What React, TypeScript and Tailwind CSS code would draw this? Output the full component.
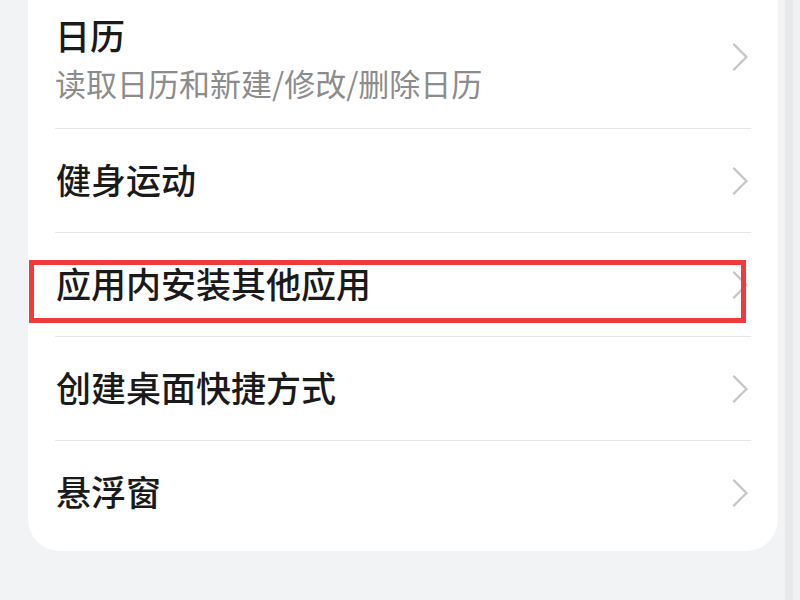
import React from "react";

const rows = [
  { title: "日历", sub: "读取日历和新建/修改/删除日历" },
  { title: "健身运动" },
  { title: "应用内安装其他应用" },
  { title: "创建桌面快捷方式" },
  { title: "悬浮窗" },
];

const Chevron = () => (
  <svg width="18" height="30" viewBox="0 0 18 30" className="shrink-0">
    <path d="M3 2.5 L15.5 15 L3 27.5" fill="none" stroke="#c6c6c8" strokeWidth="2.4" strokeLinecap="round" strokeLinejoin="round" />
  </svg>
);

const App = () => {
  return (
    <main
      className="relative w-[800px] h-[600px] overflow-hidden bg-[#f2f3f5] flex"
      style={{ fontFamily: '"Noto Sans CJK SC", "Noto Sans", sans-serif' }}
    >
      <div className="w-[28px] shrink-0" />
      {/* card */}
      <div className="w-[750px] h-[551px] shrink-0 bg-white rounded-b-[32px] px-[27px] flex flex-col">
        {rows.map((r, i) =>
          r.sub ? (
            <div key={i} className="h-[128px] flex items-center justify-between pt-[12px] pb-[24px]">
              <div className="flex flex-col">
                <span className="text-[35px] leading-[46px] font-medium text-[#1a1a1a]">{r.title}</span>
                <span className="mt-[4px] text-[31px] leading-[42px] text-[#8c8c8c]">{r.sub}</span>
              </div>
              <div className="-mt-[2px] mr-[2px]">
                <Chevron />
              </div>
            </div>
          ) : (
            <div key={i} className="h-[104px] border-t border-[#e8e8e8] flex items-center justify-between">
              <span className="text-[35px] leading-[46px] font-medium text-[#1a1a1a] ml-[1px] pb-[4px]">{r.title}</span>
              <div className="mr-[2px]">
                <Chevron />
              </div>
            </div>
          )
        )}
      </div>
      <div className="w-[7px] shrink-0" />
      <div className="w-[8px] shrink-0 bg-[#e8e9eb]" />
      <div className="flex-1 bg-[#f0f1f3]" />

      {/* annotation box */}
      <div className="absolute left-[29px] top-[260px] w-[717px] h-[63px] border-[5px] border-[#f03a3c]" />
    </main>
  );
};

export default App;
